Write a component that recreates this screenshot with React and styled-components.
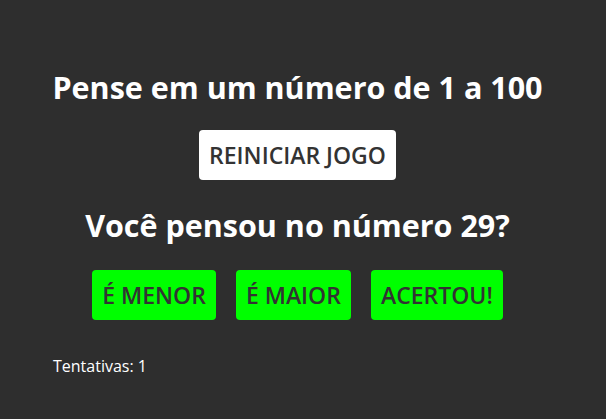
import { useState } from 'react'
import styled, { createGlobalStyle } from 'styled-components'

const GlobalStyle = createGlobalStyle`
body {
  margin: 0;
  background-color: #2e2e2e;
  font-family: "Open Sans", "DejaVu Sans", sans-serif;
}
`

const Main = styled.div`
display: flex;
flex-direction: column;
align-items: center;
padding: 70px 64px 0 53px;
min-height: 419px;
box-sizing: border-box;
`

const Title = styled.h1`
color: #ffffff;
font-size: 30.5px;
font-weight: 700;
margin: 0;
line-height: 34px;
white-space: nowrap;
`

const Question = styled(Title)`
margin-top: 28px;
`

const Button = styled.button`
font-family: inherit;
font-size: 23px;
font-weight: 600;
color: #333333;
background-color: ${props => props.$green ? '#00ff00' : '#ffffff'};
border: none;
border-radius: 4px;
height: 50px;
padding: 0 10px;
cursor: pointer;
`

const ResetButton = styled(Button)`
margin-top: 26px;
`

const Row = styled.div`
display: flex;
gap: 20px;
margin-top: 28px;
`

const Attempts = styled.p`
align-self: flex-start;
color: #ffffff;
font-size: 16px;
font-weight: 500;
line-height: 20px;
margin: 36px 0 0;
`

const App = () => {
  const [min, setMin] = useState(1)
  const [max, setMax] = useState(100)
  const [guess, setGuess] = useState(29)
  const [tries, setTries] = useState(1)

  const reset = () => {
    setMin(1)
    setMax(100)
    setGuess(29)
    setTries(1)
  }

  const lower = () => {
    const newMax = guess - 1
    setMax(newMax)
    setGuess(Math.floor((min + newMax) / 2))
    setTries(tries + 1)
  }

  const higher = () => {
    const newMin = guess + 1
    setMin(newMin)
    setGuess(Math.floor((newMin + max) / 2))
    setTries(tries + 1)
  }

  return (
    <Main>
      <GlobalStyle />
      <Title>Pense em um número de 1 a 100</Title>
      <ResetButton onClick={reset}>REINICIAR JOGO</ResetButton>
      <Question>Você pensou no número {guess}?</Question>
      <Row>
        <Button $green onClick={lower}>É MENOR</Button>
        <Button $green onClick={higher}>É MAIOR</Button>
        <Button $green>ACERTOU!</Button>
      </Row>
      <Attempts>Tentativas: {tries}</Attempts>
    </Main>
  )
}

export default App
